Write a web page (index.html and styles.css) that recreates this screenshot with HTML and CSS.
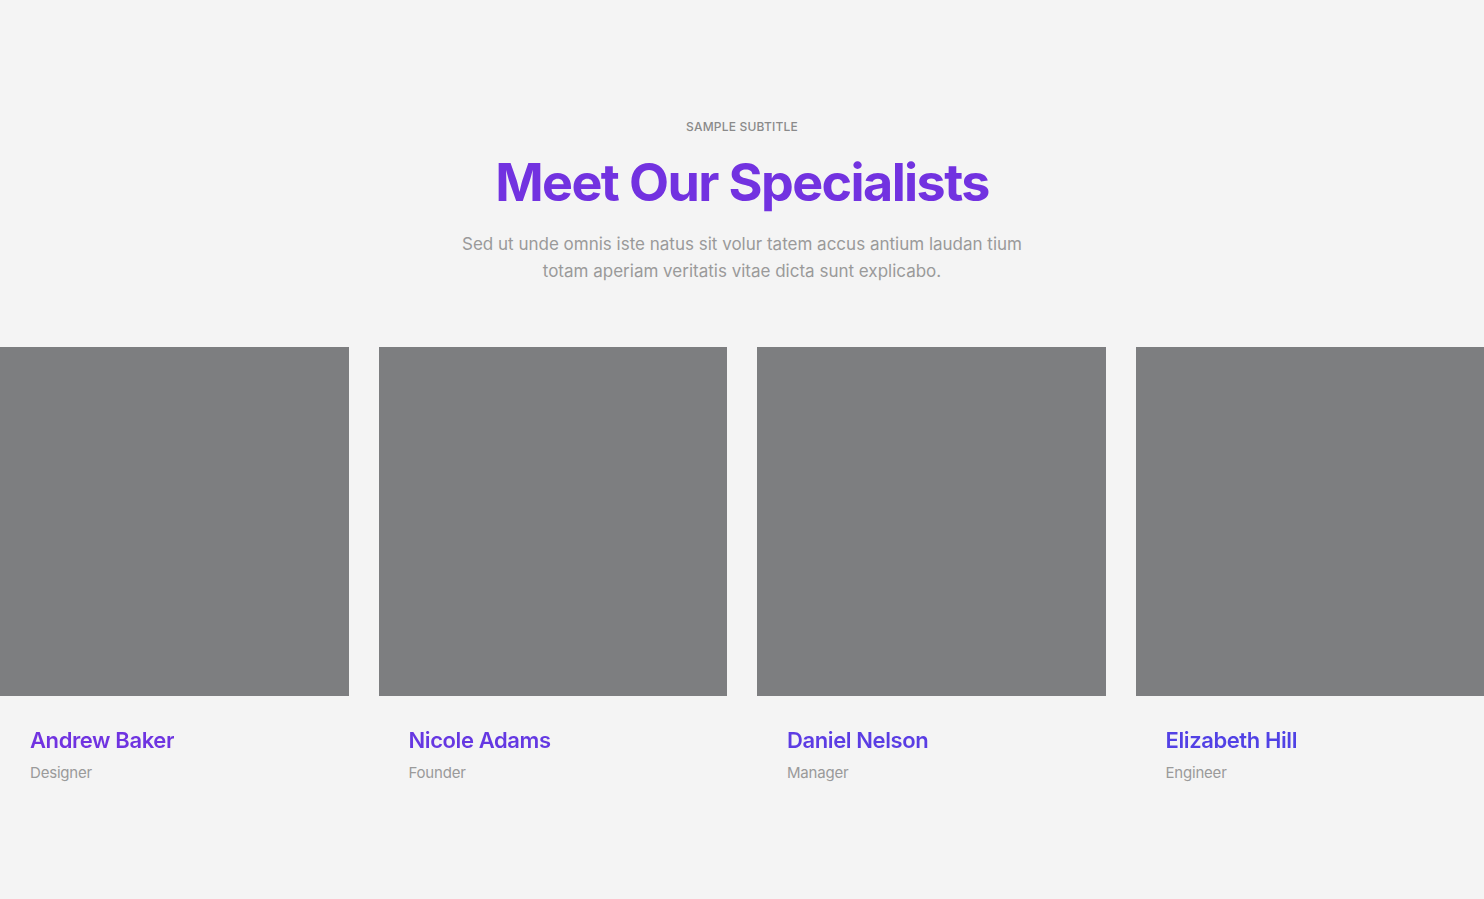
FILE: index.html
```html
<!DOCTYPE html>
<html lang="en">
<head>
    <meta charset="UTF-8">
    <meta name="viewport" content="width=device-width, initial-scale=1.0">
    <title>Meet Our Specialists</title>
    <link rel="stylesheet" href="styles.css">
</head>
<body>
    <section class="team">
        <header class="team-head">
            <p class="subtitle">Sample Subtitle</p>
            <h1 class="title">Meet Our Specialists</h1>
            <p class="lead">Sed ut unde omnis iste natus sit volur tatem accus antium laudan tium totam aperiam veritatis vitae dicta sunt explicabo.</p>
        </header>

        <div class="grid">
            <div class="member">
                <div class="photo"></div>
                <div class="info">
                    <h3 class="name">Andrew Baker</h3>
                    <p class="role">Designer</p>
                </div>
            </div>
            <div class="member">
                <div class="photo"></div>
                <div class="info">
                    <h3 class="name">Nicole Adams</h3>
                    <p class="role">Founder</p>
                </div>
            </div>
            <div class="member">
                <div class="photo"></div>
                <div class="info">
                    <h3 class="name">Daniel Nelson</h3>
                    <p class="role">Manager</p>
                </div>
            </div>
            <div class="member">
                <div class="photo"></div>
                <div class="info">
                    <h3 class="name">Elizabeth Hill</h3>
                    <p class="role">Engineer</p>
                </div>
            </div>
        </div>
    </section>
</body>
</html>
```

FILE: styles.css
```css
:root {
    --purple: #7232e0;
    --blue: #4a44e6;
    --muted: #9a9a9a;
    --bg: #f4f4f4;
    --photo: #7d7e80;
}

body {
    font-family: Inter, 'Noto Sans', sans-serif;
    margin: 0;
    padding: 0;
    background-color: var(--bg);
}

.team {
    padding: 119px 0 100px;
}

.team-head {
    text-align: center;
    max-width: 575px;
    margin: 0 auto 62px;
}

.subtitle {
    margin: 0;
    font-size: 12px;
    line-height: 16px;
    text-transform: uppercase;
    color: #8a8a8a;
    letter-spacing: 0.2px;
    font-weight: 500;
}

.title {
    margin: 18px 0 18px;
    font-size: 52px;
    line-height: 60px;
    font-weight: 700;
    letter-spacing: -1.6px;
    color: var(--purple);
}

.lead {
    margin: 0;
    font-size: 17px;
    line-height: 27px;
    color: var(--muted);
    letter-spacing: 0;
}

.grid {
    display: grid;
    grid-template-columns: repeat(4, 1fr);
    gap: 30px;
}

.photo {
    aspect-ratio: 1 / 1;
    background-color: var(--photo);
}

.info {
    padding: 30px 30px 0;
}

.name {
    margin: 0;
    font-size: 22px;
    line-height: 28px;
    font-weight: 600;
    letter-spacing: -0.4px;
    background: linear-gradient(90deg, var(--purple), var(--blue));
    background-attachment: fixed;
    -webkit-background-clip: text;
    background-clip: text;
    color: transparent;
    display: inline-block;
}

.role {
    margin: 9px 0 0;
    font-size: 15px;
    line-height: 20px;
    color: var(--muted);
    letter-spacing: -0.2px;
}
```
